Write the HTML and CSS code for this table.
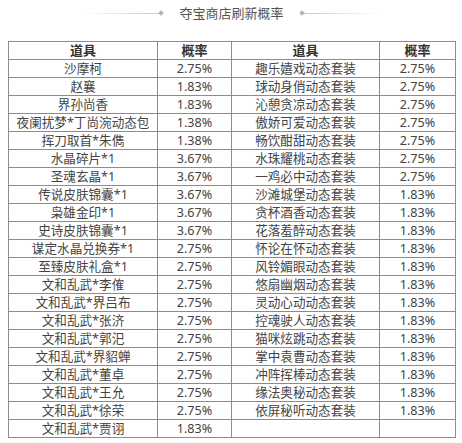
FILE: index.html
```html
<!DOCTYPE html>
<html lang="zh-CN">
<head>
  <meta charset="UTF-8">
  <meta name="viewport" content="width=device-width, initial-scale=1.0">
  <title>夺宝商店刷新概率</title>
  <link rel="stylesheet" href="styles.css">
</head>
<body>
  <!-- タイトル -->
  <div class="title">
    <span class="line line-left"></span>
    <span class="dot"></span>
    <h2>夺宝商店刷新概率</h2>
    <span class="dot"></span>
    <span class="line line-right"></span>
  </div>

  <table class="rate-table">
    <colgroup>
      <col class="col-name">
      <col class="col-rate">
      <col class="col-name2">
      <col class="col-rate2">
    </colgroup>
    <tr class="head">
      <th>道具</th><th>概率</th><th>道具</th><th>概率</th>
    </tr>
    <tr><td>沙摩柯</td><td>2.75%</td><td>趣乐嬉戏动态套装</td><td>2.75%</td></tr>
    <tr><td>赵襄</td><td>1.83%</td><td>球动身俏动态套装</td><td>2.75%</td></tr>
    <tr><td>界孙尚香</td><td>1.83%</td><td>沁憩贪凉动态套装</td><td>2.75%</td></tr>
    <tr><td>夜阑扰梦*丁尚涴动态包</td><td>1.38%</td><td>傲娇可爱动态套装</td><td>2.75%</td></tr>
    <tr><td>挥刀取首*朱儁</td><td>1.38%</td><td>畅饮酣甜动态套装</td><td>2.75%</td></tr>
    <tr><td>水晶碎片*1</td><td>3.67%</td><td>水珠耀桃动态套装</td><td>2.75%</td></tr>
    <tr><td>圣魂玄晶*1</td><td>3.67%</td><td>一鸡必中动态套装</td><td>2.75%</td></tr>
    <tr><td>传说皮肤锦囊*1</td><td>3.67%</td><td>沙滩城堡动态套装</td><td>1.83%</td></tr>
    <tr><td>枭雄金印*1</td><td>3.67%</td><td>贪杯酒香动态套装</td><td>1.83%</td></tr>
    <tr><td>史诗皮肤锦囊*1</td><td>3.67%</td><td>花落羞醉动态套装</td><td>1.83%</td></tr>
    <tr><td>谋定水晶兑换券*1</td><td>2.75%</td><td>怀论在怀动态套装</td><td>1.83%</td></tr>
    <tr><td>至臻皮肤礼盒*1</td><td>2.75%</td><td>风铃媚眼动态套装</td><td>1.83%</td></tr>
    <tr><td>文和乱武*李傕</td><td>2.75%</td><td>悠扇幽烟动态套装</td><td>1.83%</td></tr>
    <tr><td>文和乱武*界吕布</td><td>2.75%</td><td>灵动心动动态套装</td><td>1.83%</td></tr>
    <tr><td>文和乱武*张济</td><td>2.75%</td><td>控魂驶人动态套装</td><td>1.83%</td></tr>
    <tr><td>文和乱武*郭汜</td><td>2.75%</td><td>猫咪炫跳动态套装</td><td>1.83%</td></tr>
    <tr><td>文和乱武*界貂蝉</td><td>2.75%</td><td>掌中袁曹动态套装</td><td>1.83%</td></tr>
    <tr><td>文和乱武*董卓</td><td>2.75%</td><td>冲阵挥棒动态套装</td><td>1.83%</td></tr>
    <tr><td>文和乱武*王允</td><td>2.75%</td><td>缘法奥秘动态套装</td><td>1.83%</td></tr>
    <tr><td>文和乱武*徐荣</td><td>2.75%</td><td>依屏秘听动态套装</td><td>1.83%</td></tr>
    <tr><td>文和乱武*贾诩</td><td>1.83%</td><td></td><td></td></tr>
  </table>
</body>
</html>
```

FILE: styles.css
```css
body {
  font-family: "Noto Sans", "Noto Sans CJK SC", sans-serif;
  margin: 0;
  padding: 0 7px 0 8px;
  background-color: #fff;
  color: #444;
}
.title {
  display: flex;
  justify-content: center;
  align-items: center;
  height: 26px;
  margin-bottom: 15px;
}
.title h2 {
  margin: 0 16px;
  font-size: 13px;
  font-weight: normal;
  color: #555;
  line-height: 26px;
}
.line {
  width: 78px;
  height: 1px;
}
.line-left {
  background: linear-gradient(to right, rgba(200, 200, 200, 0), #c8c8c8);
}
.line-right {
  background: linear-gradient(to left, rgba(200, 200, 200, 0), #c8c8c8);
}
.dot {
  width: 4px;
  height: 4px;
  background-color: #b4b4b4;
  transform: rotate(45deg);
}
.rate-table {
  width: 447px;
  border-collapse: collapse;
  table-layout: fixed;
  font-size: 12.6px;
}
.col-name {
  width: 149px;
}
.col-rate {
  width: 74px;
}
.col-name2 {
  width: 148px;
}
.col-rate2 {
  width: 76px;
}
.rate-table th,
.rate-table td {
  border: 1px solid #8c8c8c;
  height: 17px;
  padding: 0;
  text-align: center;
  line-height: 17px;
  white-space: nowrap;
}
.rate-table th {
  font-size: 13px;
  font-weight: bold;
  color: #333;
}
```
